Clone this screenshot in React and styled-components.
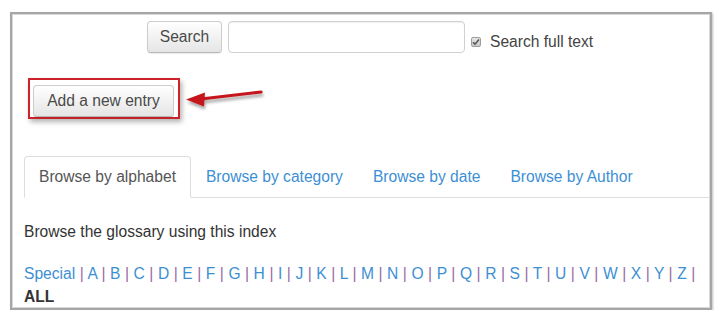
import styled, { createGlobalStyle } from "styled-components";

const GlobalStyle = createGlobalStyle`
  body {
    margin: 0;
    background: #fff;
    font-family: "Liberation Sans", Arial, sans-serif;
  }
`;

const letters = "ABCDEFGHIJKLMNOPQRSTUVWXYZ".split("");
const tabs = ["Browse by alphabet", "Browse by category", "Browse by date", "Browse by Author"];

const App = () => {
  return (
    <>
      <GlobalStyle />
      <Frame>
        <SearchRow>
          <Button>Search</Button>
          <SearchInput type="text" />
          <CheckLabel>
            <FakeCheck>
              <svg width="8" height="8" viewBox="0 0 8 8">
                <path d="M1 4.2 L3 6.2 L7 1.6" fill="none" stroke="#555" strokeWidth="1.6" />
              </svg>
            </FakeCheck>
            Search full text
          </CheckLabel>
        </SearchRow>

        <EntryRow>
          <Highlight>
            <Button $wide>Add a new entry</Button>
          </Highlight>
          <Arrow width="82" height="41" viewBox="0 0 82 41">
            <defs>
              <filter id="sh" x="-20%" y="-50%" width="140%" height="200%">
                <feDropShadow dx="1" dy="3" stdDeviation="1.6" floodColor="#000" floodOpacity="0.35" />
              </filter>
            </defs>
            <g filter="url(#sh)">
              <path d="M18 21 L78 14" stroke="#c4161c" strokeWidth="3.2" strokeLinecap="round" />
              <path d="M3 21.5 L22 14.5 L21 28.5 Z" fill="#c4161c" />
            </g>
          </Arrow>
        </EntryRow>

        <TabList>
          {tabs.map((t, i) => (
            <Tab key={t} $active={i === 0}>
              {t}
            </Tab>
          ))}
        </TabList>

        <Intro>Browse the glossary using this index</Intro>
        <Index>
          <IndexLink>Special</IndexLink>
          {letters.map((l) => (
            <span key={l}>
              {" "}
              <Sep>|</Sep> <IndexLink>{l}</IndexLink>
            </span>
          ))}{" "}
          <Sep>|</Sep>
          <All>ALL</All>
        </Index>
      </Frame>
    </>
  );
};

const Frame = styled.div`
  box-sizing: border-box;
  margin: 12px 0 0 10px;
  width: 702px;
  height: 298px;
  border: 2px solid #a6a6a6;
  box-shadow: inset 0 0 0 1px #d8d8d8, 1px 1px 2px rgba(0, 0, 0, 0.25);
  padding: 7px 0 0 12px;
  font-size: 15.6px;
  color: #333;
  display: flex;
  flex-direction: column;
`;

const SearchRow = styled.div`
  display: flex;
  align-items: center;
  padding-left: 123px;
  height: 32px;
`;

const Button = styled.button`
  box-sizing: border-box;
  height: 32px;
  width: ${(p) => (p.$wide ? "141px" : "75px")};
  border: 1px solid #cdcdcd;
  border-bottom-color: #b8b8b8;
  border-radius: 4px;
  background: linear-gradient(#ffffff, #e5e5e5);
  box-shadow: inset 0 1px 0 rgba(255, 255, 255, 0.8), 0 1px 1px rgba(0, 0, 0, 0.08);
  font-family: inherit;
  font-size: 15.6px;
  color: #4a4a4a;
  padding: 0;
`;

const SearchInput = styled.input`
  box-sizing: border-box;
  margin-left: 6px;
  width: 237px;
  height: 32px;
  border: 1px solid #d0d0d0;
  border-radius: 4px;
  box-shadow: inset 0 1px 1px rgba(0, 0, 0, 0.06);
  outline: none;
`;

const CheckLabel = styled.label`
  display: flex;
  align-items: center;
  margin-left: 6px;
  margin-top: 10px;
  color: #444;
`;

const FakeCheck = styled.span`
  box-sizing: border-box;
  width: 10px;
  height: 10px;
  margin-right: 9px;
  border: 1px solid #9d9d9d;
  border-radius: 2px;
  background: linear-gradient(#e6e6e6, #c8c8c8);
  display: flex;
  align-items: center;
  justify-content: center;
`;

const EntryRow = styled.div`
  display: flex;
  align-items: flex-start;
  margin-top: 25px;
  padding-left: 4px;
`;

const Highlight = styled.div`
  box-sizing: border-box;
  width: 152px;
  height: 41px;
  border: 2px solid #cc2229;
  padding: 5px 0 0 3px;
  box-shadow: 2px 3px 5px rgba(0, 0, 0, 0.3);
`;

const Arrow = styled.svg`
  margin-left: 3px;
  display: block;
`;

const TabList = styled.div`
  box-sizing: border-box;
  display: flex;
  margin-top: 37px;
  height: 42px;
  border-bottom: 1px solid #dddddd;
`;

const Tab = styled.div`
  box-sizing: border-box;
  height: 42px;
  padding: 0 14px;
  display: flex;
  align-items: center;
  border: 1px solid ${(p) => (p.$active ? "#dddddd" : "transparent")};
  border-bottom-color: ${(p) => (p.$active ? "#fff" : "transparent")};
  border-radius: 4px 4px 0 0;
  background: ${(p) => (p.$active ? "#fff" : "transparent")};
  color: ${(p) => (p.$active ? "#555" : "#3d8fd4")};
  margin-bottom: ${(p) => (p.$active ? "-1px" : "0")};
  height: ${(p) => (p.$active ? "42px" : "41px")};
`;

const Intro = styled.div`
  margin-top: 22px;
  line-height: 23px;
`;

const Index = styled.div`
  margin-top: 19px;
  line-height: 23px;
  word-spacing: 0.17px;
`;

const IndexLink = styled.span`
  color: #3d8fd4;
`;

const Sep = styled.span`
  color: #9a6aa6;
`;

const All = styled.div`
  font-weight: bold;
  color: #333;
`;

export default App;
